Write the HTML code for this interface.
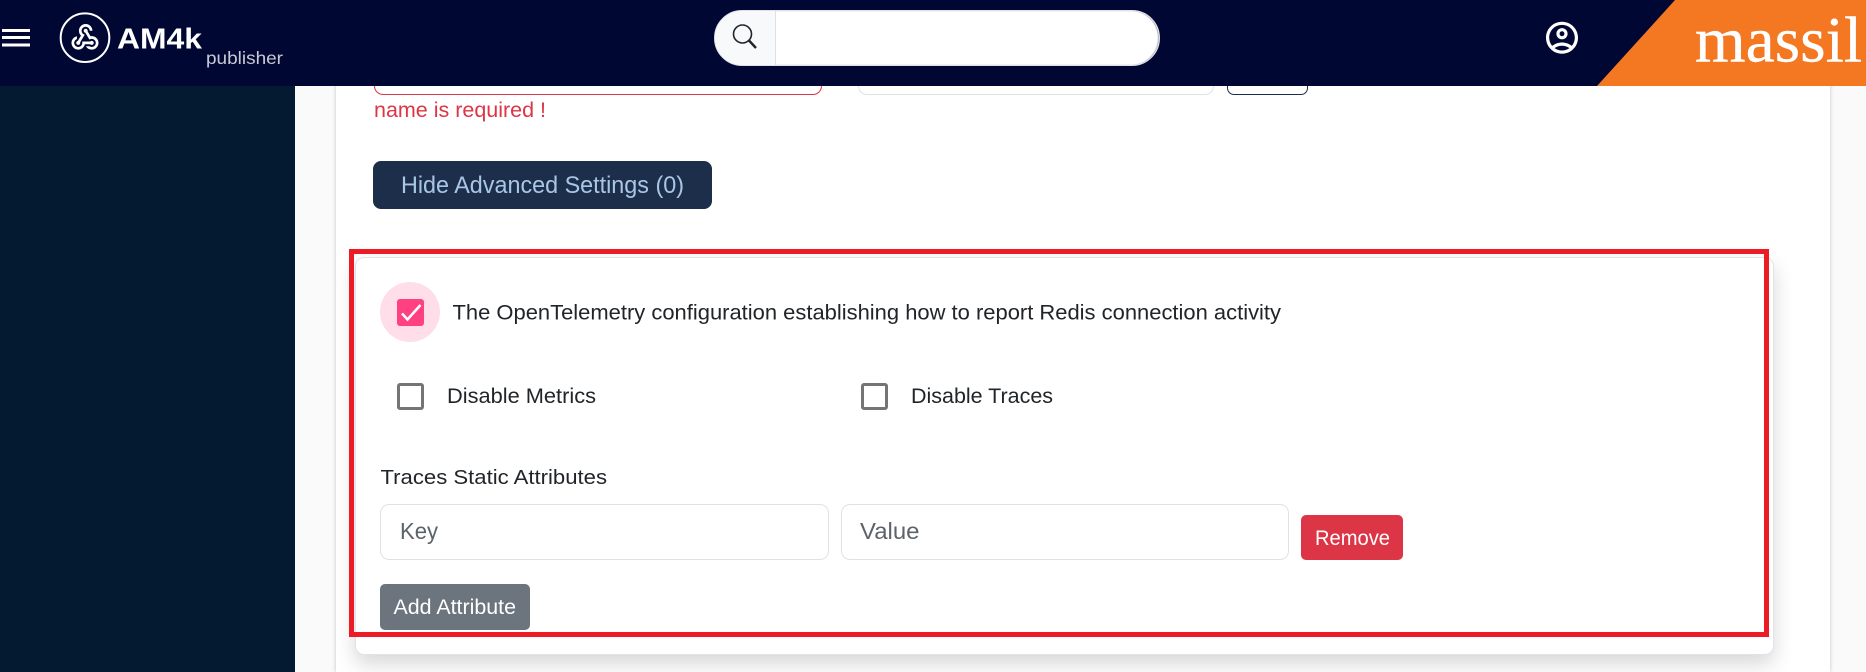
<!DOCTYPE html>
<html lang="en"><head><meta charset="utf-8"><title>AM4k publisher</title>
<style>
html,body{margin:0;padding:0;width:1866px;height:672px;overflow:hidden;background:#fafafa}
#w{position:relative;width:1866px;height:672px;overflow:hidden}
#w div{position:absolute;box-sizing:border-box}
svg{position:absolute;left:0;top:0;display:block}
text{font-family:"Liberation Sans",sans-serif;fill:#212529}
</style></head><body><div id="w">
<div style="left:0;top:86px;width:295px;height:586px;background:#041a30"></div>
<div style="left:336px;top:60px;width:1494px;height:612px;background:#fff;box-shadow:0 0 4px rgba(0,0,0,.22)"></div>
<div style="left:374px;top:40px;width:448px;height:55px;border:1px solid #dc3545;border-radius:9px"></div>
<div style="left:858px;top:40px;width:356px;height:55px;border:1px solid #dee2e6;border-radius:9px"></div>
<div style="left:1227px;top:40px;width:81px;height:55px;border:1px solid #1c2e4a;border-radius:7px"></div>
<div style="left:373px;top:161px;width:339px;height:48px;background:#1c2e4a;border-radius:8px"></div>
<div style="left:355px;top:257px;width:1419px;height:398px;background:#fff;border:1px solid #e3e2ea;border-radius:9px;box-shadow:0 9px 20px rgba(0,0,0,.16)"></div>
<div style="left:380px;top:282px;width:60px;height:60px;border-radius:50%;background:#ffdde9"></div>
<div style="left:397px;top:299px;width:27px;height:27px;border-radius:3px;background:#ff4081"></div>
<div style="left:397px;top:383px;width:27px;height:27px;border:3px solid #757575;border-radius:3px"></div>
<div style="left:861px;top:383px;width:27px;height:27px;border:3px solid #757575;border-radius:3px"></div>
<div style="left:380px;top:504px;width:449px;height:56px;border:1px solid #dee2e6;border-radius:9px;background:#fff"></div>
<div style="left:841px;top:504px;width:448px;height:56px;border:1px solid #dee2e6;border-radius:9px;background:#fff"></div>
<div style="left:1301px;top:515px;width:102px;height:45px;background:#dc3545;border-radius:5px"></div>
<div style="left:380px;top:584px;width:150px;height:46px;background:#6c757d;border-radius:5px"></div>
<div style="left:349px;top:249px;width:1420px;height:388px;border:5px solid #ed1c24"></div>
<div style="left:0;top:0;width:1866px;height:86px;background:#000733"></div>
<div style="left:1597px;top:0;width:269px;height:86px;background:#f47721;clip-path:polygon(78px 0,269px 0,269px 86px,0 86px)"></div>
<div style="left:714px;top:10px;width:446px;height:56px;background:#fff;border:1px solid #dee2e6;border-radius:28px;overflow:hidden;box-shadow:inset -1px 0 1px #a9aab5"><div style="left:0;top:0;width:61px;height:54px;background:#f8f9fa;border-right:1px solid #dee2e6"></div></div>
<svg width="1866" height="672" viewBox="0 0 1866 672">
<rect x="2" y="29" width="28" height="3" fill="#fff"/><rect x="2" y="36" width="28" height="3" fill="#fff"/><rect x="2" y="43.5" width="28" height="3" fill="#fff"/>
<circle cx="85" cy="37.7" r="24.3" fill="none" stroke="#fff" stroke-width="2"/>
<path transform="translate(68.8 21.3) scale(1.35)" fill="#fff" d="M10 15h5.88c.27-.31.67-.5 1.12-.5.83 0 1.5.67 1.5 1.5s-.67 1.5-1.5 1.5c-.44 0-.84-.19-1.12-.5H11.9c-.46 2.28-2.48 4-4.9 4-2.76 0-5-2.24-5-5 0-2.42 1.72-4.44 4-4.9v2.07c-1.16.41-2 1.53-2 2.83 0 1.65 1.35 3 3 3s3-1.35 3-3v-1zm2.5-11c1.65 0 3 1.35 3 3h2c0-2.76-2.24-5-5-5s-5 2.24-5 5c0 1.43.6 2.71 1.55 3.62l-2.35 3.9c-.68.14-1.2.75-1.2 1.48 0 .83.67 1.5 1.5 1.5s1.5-.67 1.5-1.5c0-.16-.02-.31-.07-.45l3.38-5.63C10.49 9.61 9.5 8.42 9.5 7c0-1.65 1.35-3 3-3zm4.5 9c-.64 0-1.23.2-1.72.54l-3.05-5.07C11.53 8.35 11 7.74 11 7c0-.83.67-1.5 1.5-1.5S14 6.17 14 7c0 .15-.02.29-.06.43l2.19 3.65c.28-.05.57-.08.87-.08 2.76 0 5 2.24 5 5s-2.24 5-5 5c-1.85 0-3.47-1.01-4.33-2.5h2.67c.48.32 1.05.5 1.66.5 1.65 0 3-1.35 3-3s-1.35-3-3-3z"/>
<text x="117" y="48.3" font-size="29" font-weight="700" textLength="85" lengthAdjust="spacingAndGlyphs" style="fill:#fff">AM4k</text>
<text x="206" y="64" font-size="17.500" textLength="77" lengthAdjust="spacingAndGlyphs" style="fill:#c9cad6">publisher</text>
<circle cx="742.5" cy="34" r="9" fill="none" stroke="#212529" stroke-width="1.6"/>
<path d="M749 40.5l7 7.5" stroke="#212529" stroke-width="2.4" fill="none"/>
<path transform="translate(1542.8 18.5) scale(1.6)" fill="#fff" d="M12 2C6.48 2 2 6.48 2 12s4.48 10 10 10 10-4.48 10-10S17.52 2 12 2zM7.35 18.5C8.66 17.56 10.26 17 12 17s3.34.56 4.65 1.5c-1.31.94-2.91 1.5-4.65 1.5s-3.34-.56-4.65-1.5zm10.79-1.38C16.45 15.8 14.32 15 12 15s-4.45.8-6.14 2.12C4.7 15.73 4 13.95 4 12c0-4.42 3.58-8 8-8s8 3.58 8 8c0 1.95-.7 3.73-1.86 5.12zM12 6c-1.93 0-3.5 1.57-3.5 3.5S10.07 13 12 13s3.5-1.57 3.5-3.5S13.93 6 12 6zm0 5c-.83 0-1.5-.67-1.5-1.5S11.17 8 12 8s1.5.67 1.5 1.5S12.83 11 12 11z"/>
<text x="1695" y="61.7" font-size="65" textLength="167" lengthAdjust="spacing" stroke="#fff" stroke-width=".4" style="font-family:'Liberation Serif',serif;fill:#fff">massil</text>
<text x="374" y="117" font-size="21" textLength="172" lengthAdjust="spacingAndGlyphs" style="fill:#dc3545">name is required !</text>
<text x="401" y="193" font-size="24" textLength="283" lengthAdjust="spacingAndGlyphs" style="fill:#a9c6e6">Hide Advanced Settings (0)</text>
<path d="M402 313.500l5.500 6 13-14.500" fill="none" stroke="#fff" stroke-width="2.600"/>
<text x="452.500" y="319.300" font-size="21" textLength="828.500" lengthAdjust="spacingAndGlyphs">The OpenTelemetry configuration establishing how to report Redis connection activity</text>
<text x="447" y="403" font-size="21" textLength="149" lengthAdjust="spacingAndGlyphs">Disable Metrics</text>
<text x="911" y="403" font-size="21" textLength="142" lengthAdjust="spacingAndGlyphs">Disable Traces</text>
<text x="380.500" y="484" font-size="20.500" textLength="226.500" lengthAdjust="spacingAndGlyphs">Traces Static Attributes</text>
<text x="400" y="539" font-size="23" textLength="38" lengthAdjust="spacingAndGlyphs" style="fill:#5c636a">Key</text>
<text x="860" y="539" font-size="23" textLength="59.500" lengthAdjust="spacingAndGlyphs" style="fill:#5c636a">Value</text>
<text x="1315" y="545" font-size="21.500" textLength="75" lengthAdjust="spacingAndGlyphs" style="fill:#fff">Remove</text>
<text x="393.500" y="614" font-size="21.500" textLength="122.500" lengthAdjust="spacingAndGlyphs" style="fill:#fff">Add Attribute</text>
</svg>
</div></body></html>
